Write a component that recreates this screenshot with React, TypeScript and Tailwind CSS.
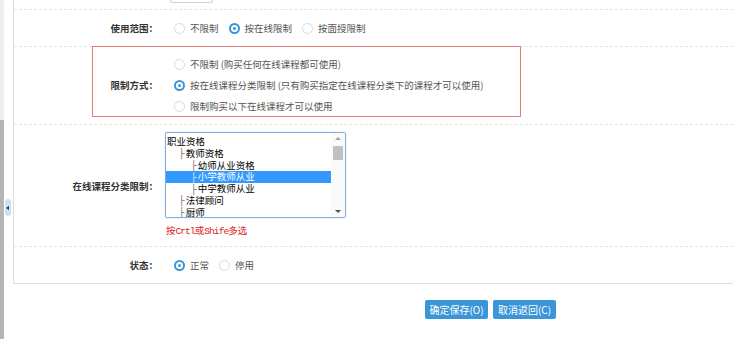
import React from 'react';

const Radio: React.FC<{ checked?: boolean; label: string }> = ({ checked, label }) => (
  <label className="flex items-center gap-[5px] text-[#555]">
    {checked ? (
      <span className="flex h-[11px] w-[11px] items-center justify-center rounded-full bg-[#3b95d9]">
        <span className="flex h-[7px] w-[7px] items-center justify-center rounded-full bg-white">
          <span className="h-[3px] w-[3px] rounded-full bg-[#3b95d9]" />
        </span>
      </span>
    ) : (
      <span className="h-[11px] w-[11px] rounded-full border-[1.5px] border-[#d6dadd] bg-white" />
    )}
    <span>{label}</span>
  </label>
);

const categories = [
  { name: '职业资格', level: 0 },
  { name: '教师资格', level: 1 },
  { name: '幼师从业资格', level: 2 },
  { name: '小学教师从业', level: 2, selected: true },
  { name: '中学教师从业', level: 2 },
  { name: '法律顾问', level: 1 },
  { name: '厨师', level: 1 },
];

const CategorySelect: React.FC = () => (
  <div className="flex h-[86px] w-[181px] overflow-hidden rounded-[2px] border border-[#86aedd] bg-white shadow-[0_0_2px_#c9dcf2]">
    <div className="flex-1 overflow-hidden pt-[3px]">
      {categories.map((c) => (
        <div
          key={c.name}
          className={`flex h-[11.8px] items-center overflow-hidden leading-[11.8px] text-black ${c.selected ? 'bg-[#3399ff] text-white' : ''}`}
          style={{ paddingLeft: 1 + c.level * 12 }}
        >
          {c.level > 0 && (
            <span className={`mr-[1px] leading-[11px] font-['DejaVu_Sans_Mono',monospace] ${c.selected ? 'text-[#d6e8ff]' : 'text-[#777]'}`}>├</span>
          )}
          {c.name}
        </div>
      ))}
    </div>
    <div className="flex w-[14px] flex-col items-center bg-[#fafafa]">
      <span className="mt-[4px] h-0 w-0 border-x-[3px] border-b-[3px] border-x-transparent border-b-[#a3a3a3]" />
      <span className="mt-[6px] h-[14px] w-[10px] bg-[#c1c1c1]" />
      <span className="mt-auto mb-[4px] h-0 w-0 border-x-[3px] border-t-[3px] border-x-transparent border-t-[#505050]" />
    </div>
  </div>
);

export default function App() {
  return (
    <div className="flex h-[339px] w-[733px] overflow-hidden bg-white font-['Noto_Sans_CJK_SC',sans-serif] text-[9.5px] leading-[12px]">
      <div className="flex w-[4px] flex-col">
        <div className="h-[120px] bg-[#efefef]" />
        <div className="flex-1 bg-[#b5b5b5]" />
      </div>
      <div className="relative w-[9px]">
        <div className="absolute left-[1px] top-[199px] flex h-[17px] w-[6px] items-center justify-start rounded-full bg-[#cfe0f3]">
          <span className="ml-[1px] h-0 w-0 border-y-[2px] border-r-[3px] border-y-transparent border-r-[#333]" />
        </div>
      </div>
      <div className="flex flex-1 flex-col">
        <div className="border-b border-l border-[#dedede]">
          <div className="h-[9px]">
            <div className="ml-[156px] h-[3px] w-[43px] rounded-b-[3px] border-x border-b border-[#d0d0d0]" />
          </div>

          <div className="flex h-[37px] items-center border-t border-dashed border-[#e4e4e4]">
            <div className="w-[144px] text-right font-bold text-[#333]">使用范围：</div>
            <div className="flex items-center gap-[10px] pl-[16px]">
              <Radio label="不限制" />
              <Radio label="按在线限制" checked />
              <Radio label="按面授限制" />
            </div>
          </div>

          <div className="h-[78px] border-t border-dashed border-[#e4e4e4]">
            <div className="-mt-[1px] ml-[78px] flex h-[71px] w-[429px] items-center border border-[#e27d7d] pt-[7px]">
              <div className="w-[65px] text-right font-bold text-[#333]">限制方式：</div>
              <div className="flex flex-col pl-[16px]">
                <div className="flex h-[21px] items-center">
                  <Radio label="不限制 (购买任何在线课程都可使用)" />
                </div>
                <div className="flex h-[21px] items-center">
                  <Radio label="按在线课程分类限制 (只有购买指定在线课程分类下的课程才可以使用)" checked />
                </div>
                <div className="flex h-[21px] items-center">
                  <Radio label="限制购买以下在线课程才可以使用" />
                </div>
              </div>
            </div>
          </div>

          <div className="flex h-[122px] items-center border-t border-dashed border-[#e4e4e4]">
            <div className="w-[144px] text-right font-bold text-[#333]">在线课程分类限制：</div>
            <div className="flex h-full flex-col pl-[7px] pt-[7px]">
              <CategorySelect />
              <div className="mt-[6px] pl-[1px] text-[#e02020]">
                按<span className="font-['Liberation_Mono',monospace] tracking-[-0.9px]">Crtl</span>或
                <span className="font-['Liberation_Mono',monospace] tracking-[-0.9px]">Shife</span>多选
              </div>
            </div>
          </div>

          <div className="flex h-[37px] items-center border-t border-dashed border-[#e4e4e4]">
            <div className="w-[144px] text-right font-bold text-[#333]">状态：</div>
            <div className="flex items-center gap-[10px] pl-[16px]">
              <Radio label="正常" checked />
              <Radio label="停用" />
            </div>
          </div>
        </div>

        <div className="flex gap-[5px] pl-[412px] pt-[16px]">
          <button className="flex h-[19px] w-[63px] items-center justify-center rounded-[2px] bg-[#3a96d8] text-[10px] text-white">
            确定保存(O)
          </button>
          <button className="flex h-[19px] w-[63px] items-center justify-center rounded-[2px] bg-[#3a96d8] text-[10px] text-white">
            取消返回(C)
          </button>
        </div>
      </div>
    </div>
  );
}
